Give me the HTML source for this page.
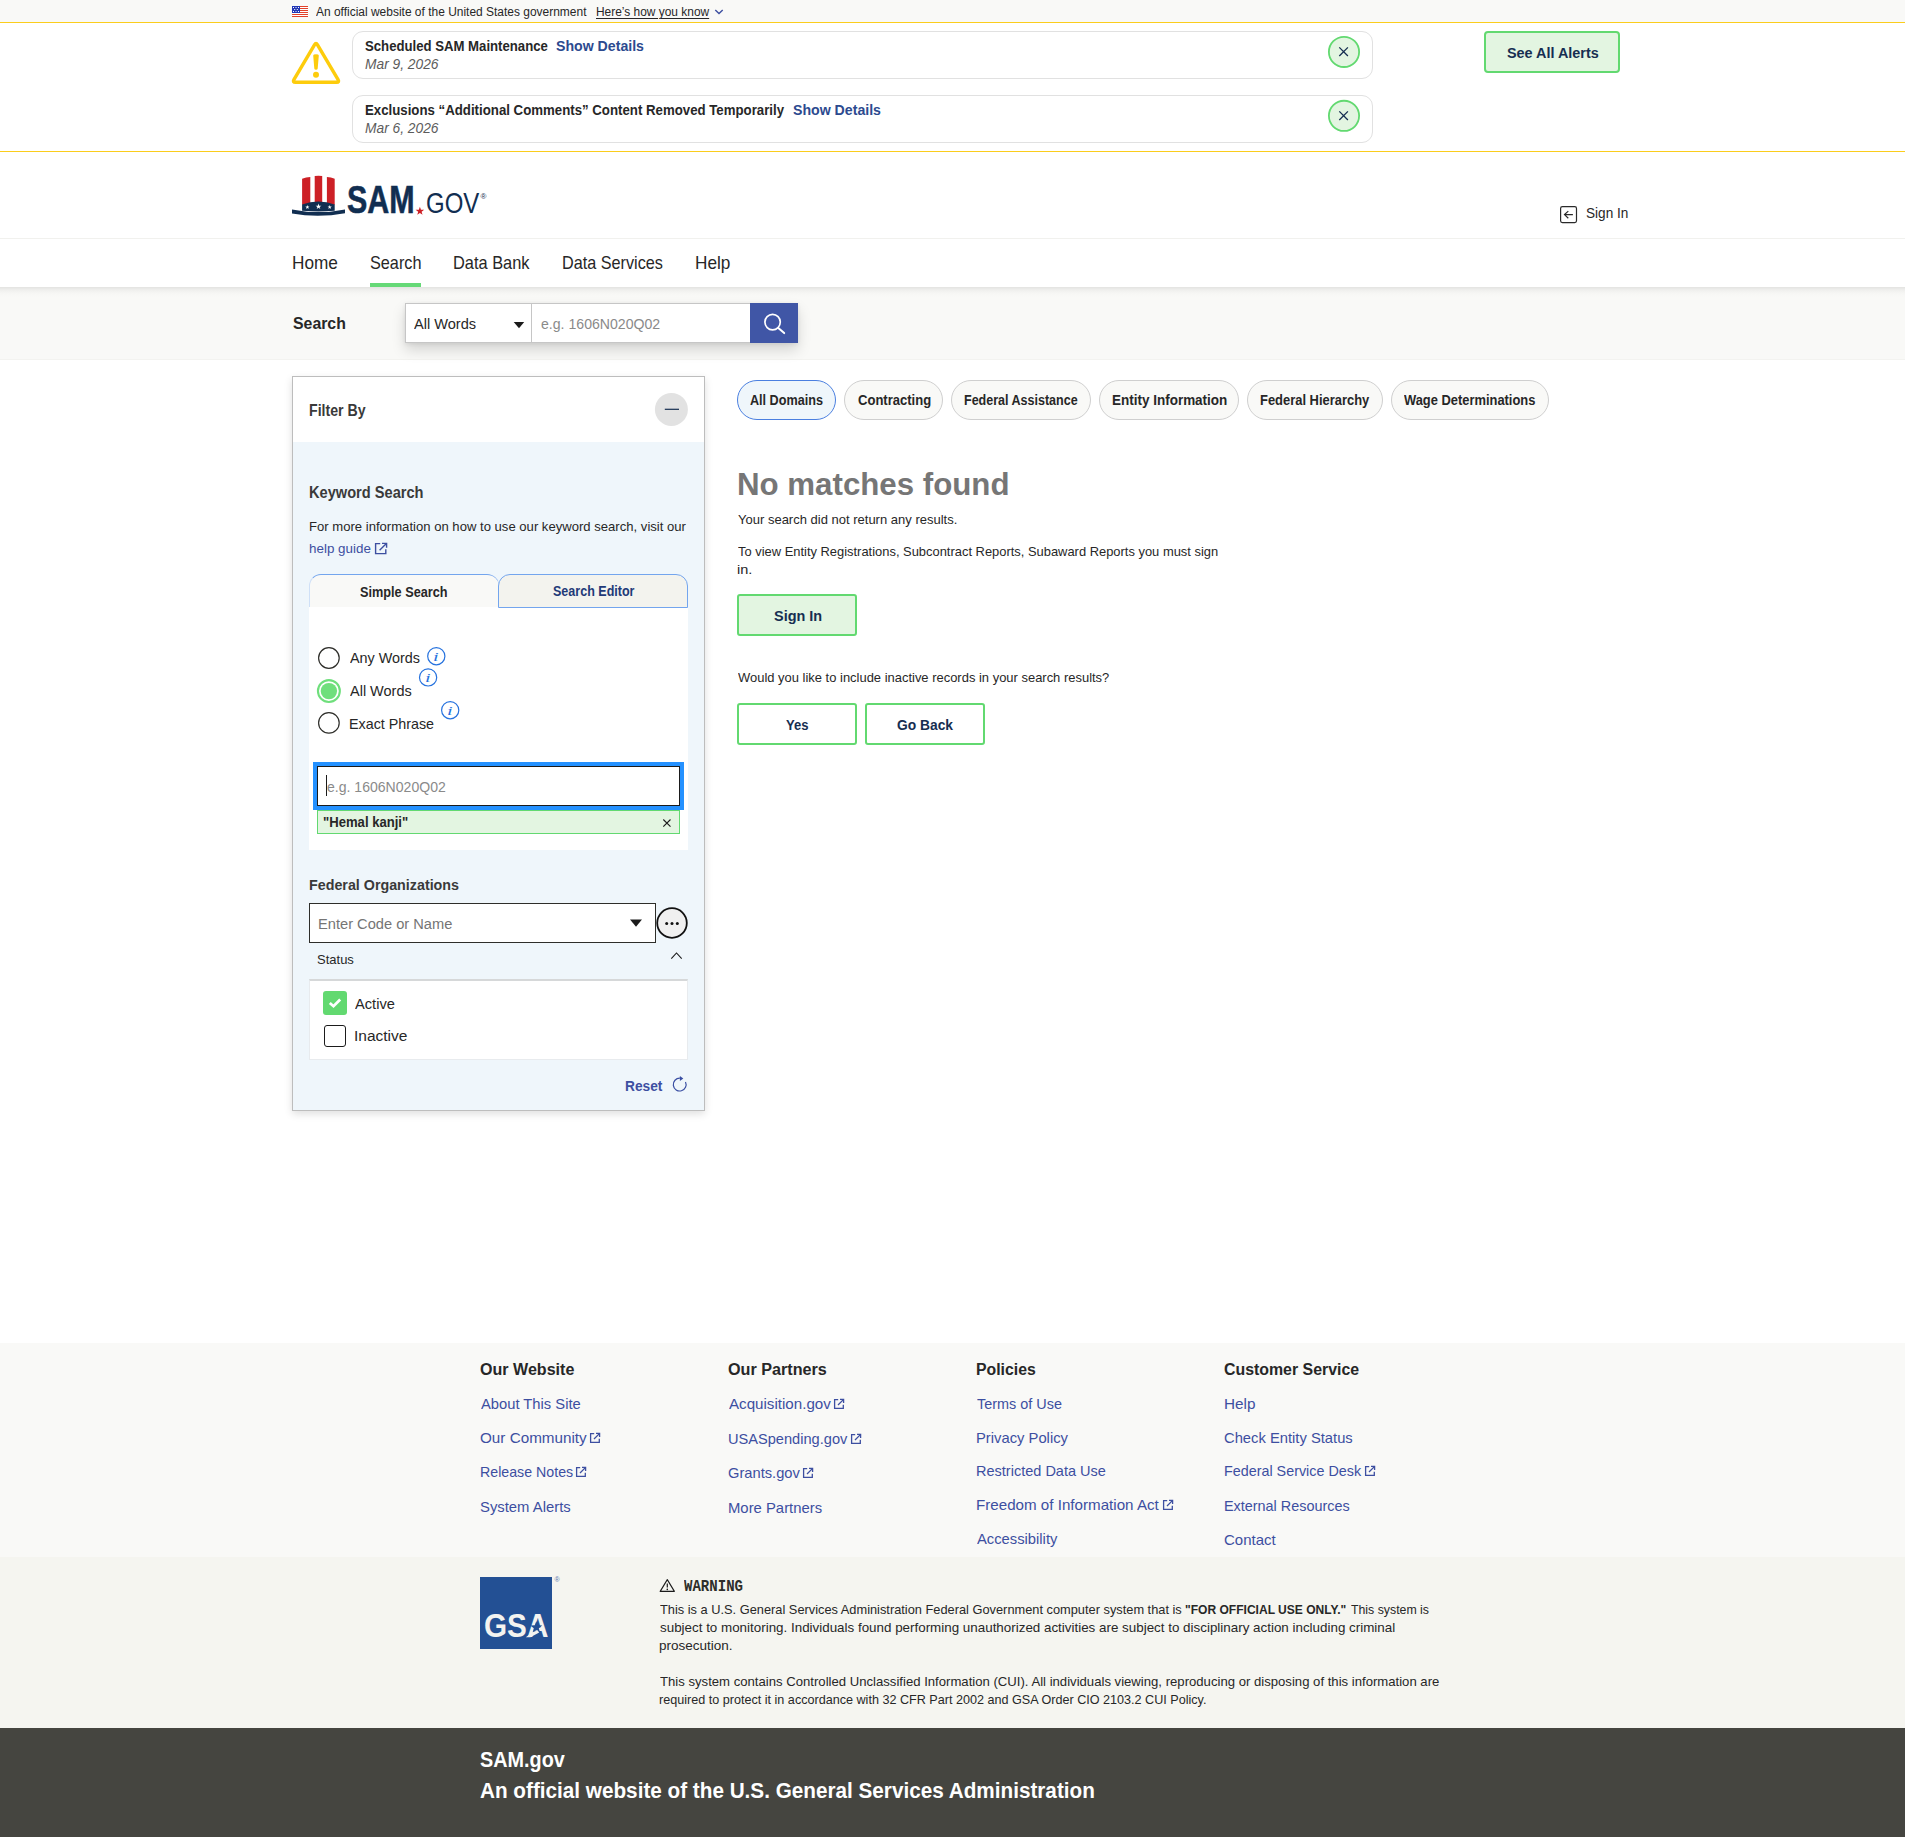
<!DOCTYPE html><html lang="en"><head><meta charset="utf-8"><title>SAM.gov | Search</title><style>
html,body{margin:0;padding:0;background:#fff}
body{width:1905px;height:1837px;position:relative;overflow:hidden;font-family:"Liberation Sans",sans-serif;color:#1b1b1b}
.abs{position:absolute;display:block}
.t{position:absolute;white-space:nowrap;line-height:1;transform-origin:0 50%}
.pill{position:absolute;top:380px;height:40px;box-sizing:border-box;border:1px solid #cfcfcf;border-radius:20px;background:#f9f9f7}

</style></head><body>
<!-- static shapes: backgrounds, boxes, icons -->
<div class="abs" style="left:0;top:0;width:1905px;height:22px;background:#f9f9f7"></div>
<div class="abs" style="left:0;top:22px;width:1905px;height:1px;background:#fbcd1c"></div>
<div class="abs" style="left:0;top:151px;width:1905px;height:1px;background:#fbcd1c"></div>
<!-- flag -->
<svg class="abs" style="left:292px;top:6px" width="16" height="11" viewBox="0 0 16 11"><rect width="16" height="11" fill="#fff"/><g fill="#e2412a"><rect y="0" width="16" height="1"/><rect y="2" width="16" height="1"/><rect y="4" width="16" height="1"/><rect y="6" width="16" height="1"/><rect y="8" width="16" height="1"/><rect y="10" width="16" height="1"/></g><rect width="8" height="7" fill="#2337b5"/><g fill="#fff"><rect x="1" y="1" width="1" height="1"/><rect x="3.5" y="1" width="1" height="1"/><rect x="6" y="1" width="1" height="1"/><rect x="2.2" y="3" width="1" height="1"/><rect x="4.8" y="3" width="1" height="1"/><rect x="1" y="5" width="1" height="1"/><rect x="3.5" y="5" width="1" height="1"/><rect x="6" y="5" width="1" height="1"/></g></svg>
<!-- chevron -->
<svg class="abs" style="left:714px;top:8px" width="10" height="8" viewBox="0 0 10 8"><path d="M1.3 2 L5 5.6 L8.7 2" fill="none" stroke="#3d4fa1" stroke-width="1.4"/></svg>
<!-- warning triangle -->
<svg class="abs" style="left:289px;top:38px" width="54" height="50" viewBox="0 0 54 50"><path d="M25.48 6.79 Q27 4.2 28.52 6.79 L49.08 41.71 Q50.6 44.3 47.6 44.3 L6.4 44.3 Q3.4 44.3 4.92 41.71 Z" fill="none" stroke="#fdcc0c" stroke-width="3.4" stroke-linejoin="round"/><path d="M24.2 17.6 Q24.2 16.2 27 16.2 Q29.8 16.2 29.8 17.6 L28.7 30.5 Q28.6 31.7 27 31.7 Q25.4 31.7 25.3 30.5 Z" fill="#fdcc0c"/><circle cx="27" cy="36.8" r="3" fill="#fdcc0c"/></svg>
<!-- alert cards -->
<div class="abs" style="left:352px;top:31px;width:1021px;height:47.6px;border:1.2px solid #e1e1e1;border-radius:11px;box-sizing:border-box;background:#fff"></div>
<div class="abs" style="left:352px;top:95px;width:1021px;height:47.6px;border:1.2px solid #e1e1e1;border-radius:11px;box-sizing:border-box;background:#fff"></div>
<!-- close buttons -->
<svg class="abs" style="left:1327px;top:35px" width="34" height="34" viewBox="0 0 34 34"><circle cx="17" cy="16.9" r="15.1" fill="#e3f5e1" stroke="#62d970" stroke-width="1.8"/><path d="M12.3 12.4 L20.9 21 M20.9 12.4 L12.3 21" stroke="#162e51" stroke-width="1.3"/></svg>
<svg class="abs" style="left:1327px;top:99px" width="34" height="34" viewBox="0 0 34 34"><circle cx="17" cy="16.85" r="15.1" fill="#e3f5e1" stroke="#62d970" stroke-width="1.8"/><path d="M12.3 12.4 L20.9 21 M20.9 12.4 L12.3 21" stroke="#162e51" stroke-width="1.3"/></svg>
<!-- see all alerts -->
<div class="abs" style="left:1484px;top:31px;width:136px;height:41.8px;border:2px solid #62d970;border-radius:4px;box-sizing:border-box;background:#e3f5e1"></div>

<!-- header -->
<div class="abs" style="left:0;top:238px;width:1905px;height:1px;background:#f1f1ee"></div>
<!-- logo hat -->
<svg class="abs" style="left:290px;top:174px" width="58" height="46" viewBox="0 0 58 46">
<path d="M12.1 4.8 Q16 3.3 20.3 3 L20.3 30 L12.1 31 Z" fill="#cd2026"/>
<path d="M24.7 2 Q28.4 1.7 32.2 2 L32.2 29 L24.7 29 Z" fill="#cd2026"/>
<path d="M36.9 3 Q41 3.3 44.7 4.8 L44.7 31 L36.9 30 Z" fill="#cd2026"/>
<path d="M12.1 30.6 Q28.4 24.6 44.7 30.6 L44.7 36.7 Q28.4 38.1 12.1 36.7 Z" fill="#112e51"/>
<path d="M2 35.4 Q28.5 40.8 55 35.4 L55 39.2 Q28.5 44.2 2 39.5 Z" fill="#112e51"/>
<g fill="#fff"><path d="M17.40,31.00 L17.92,32.49 L19.49,32.52 L18.24,33.47 L18.69,34.98 L17.40,34.08 L16.11,34.98 L16.56,33.47 L15.31,32.52 L16.88,32.49Z"/><path d="M28.50,29.60 L29.21,31.63 L31.35,31.67 L29.64,32.97 L30.26,35.03 L28.50,33.80 L26.74,35.03 L27.36,32.97 L25.65,31.67 L27.79,31.63Z"/><path d="M39.70,31.00 L40.22,32.49 L41.79,32.52 L40.54,33.47 L40.99,34.98 L39.70,34.08 L38.41,34.98 L38.86,33.47 L37.61,32.52 L39.18,32.49Z"/></g>
</svg>
<!-- red star in logo -->
<svg class="abs" style="left:415px;top:206px" width="10" height="10" viewBox="0 0 10 10"><path d="M4.90,0.70 L5.96,3.74 L9.18,3.81 L6.61,5.76 L7.55,8.84 L4.90,7.00 L2.25,8.84 L3.19,5.76 L0.62,3.81 L3.84,3.74Z" fill="#cd2026"/></svg>
<!-- sign in icon -->
<svg class="abs" style="left:1559px;top:205px" width="20" height="20" viewBox="0 0 20 20"><rect x="1.6" y="1.7" width="15.9" height="15.9" rx="1.8" fill="none" stroke="#2a2a2a" stroke-width="1.2"/><path d="M13.9 9.6 L5.6 9.6 M9.3 6.1 L5.5 9.6 L9.3 13.2" fill="none" stroke="#2a2a2a" stroke-width="1.2"/></svg>
<!-- nav underline -->
<div class="abs" style="left:370px;top:283px;width:51px;height:4px;background:#66d977"></div>
<!-- search band -->
<div class="abs" style="left:0;top:287px;width:1905px;height:72.5px;background:linear-gradient(#e3e3e1 0,#efefed 3px,#f6f6f4 6px,#f9f9f7 10px,#f9f9f7 100%)"></div>
<div class="abs" style="left:0;top:359px;width:1905px;height:1px;background:#f3f3f0"></div>
<div class="abs" style="left:405px;top:303px;width:393px;height:40px;background:#fff;box-shadow:0 7px 14px rgba(0,0,0,.15),0 1px 4px rgba(0,0,0,.08)"></div>
<div class="abs" style="left:405px;top:303px;width:345px;height:40px;box-sizing:border-box;border:1px solid #c6c6c6;border-right:0;background:#fff"></div>
<div class="abs" style="left:531px;top:303px;width:1px;height:40px;background:#c6c6c6"></div>
<svg class="abs" style="left:513px;top:320.5px" width="12" height="8" viewBox="0 0 12 8"><path d="M0.7 1 L11.2 1 L6 7.2 Z" fill="#1b1b1b"/></svg>
<div class="abs" style="left:750px;top:303px;width:48px;height:40px;background:#4056a6"></div>
<svg class="abs" style="left:762px;top:311px" width="26" height="26" viewBox="0 0 26 26"><circle cx="10.6" cy="11.1" r="7.7" fill="none" stroke="#fff" stroke-width="1.7"/><path d="M16.3 17 L22.2 22.1" stroke="#fff" stroke-width="2" stroke-linecap="round"/></svg>

<!-- filter panel -->
<div class="abs" style="left:292px;top:376px;width:413px;height:735px;box-sizing:border-box;border:1px solid #bdbdbd;background:#eff6fb;box-shadow:0 3px 8px rgba(0,0,0,.13)"></div>
<div class="abs" style="left:293px;top:377px;width:411px;height:65px;background:#fff"></div>
<svg class="abs" style="left:654px;top:392px" width="35" height="35" viewBox="0 0 35 35"><circle cx="17.4" cy="17.4" r="16.5" fill="#e2e2e2"/><path d="M10.8 17.3 L25 17.3" stroke="#162e51" stroke-width="1.2"/></svg>
<!-- help guide icon -->
<svg class="abs" style="left:374px;top:542px" width="14" height="13" viewBox="0 0 14 13"><path d="M6.2 1.6 L1.6 1.6 L1.6 11.6 L11.8 11.6 L11.8 7.2 M8 1.4 L12.6 1.4 L12.6 5.8 M12.4 1.6 L5.6 8.2" fill="none" stroke="#3d4fa1" stroke-width="1.4"/></svg>
<!-- tabs -->
<div class="abs" style="left:309px;top:607px;width:379px;height:243px;background:#fff"></div>
<div class="abs" style="left:309px;top:574px;width:190px;height:33px;box-sizing:border-box;border-top:1px solid #73a5ee;border-left:1px solid #cfe0f7;border-radius:12px 12px 0 0;background:#f9f9f7"></div>
<div class="abs" style="left:498px;top:574px;width:190px;height:34px;box-sizing:border-box;border:1px solid #73a5ee;border-radius:12px 12px 0 0;background:#f3f3ee"></div>
<!-- radios -->
<svg class="abs" style="left:316px;top:645px" width="26" height="92" viewBox="0 0 26 92">
<circle cx="12.9" cy="13" r="10.3" fill="#fff" stroke="#2e2e2a" stroke-width="1.2"/>
<circle cx="12.9" cy="46.1" r="10.95" fill="#fff" stroke="#6fdf7c" stroke-width="2.1"/><circle cx="12.9" cy="46.1" r="8.2" fill="#6fdf7c"/>
<circle cx="12.9" cy="77.9" r="10.3" fill="#fff" stroke="#2e2e2a" stroke-width="1.2"/>
</svg>
<!-- info icons circles -->
<svg class="abs" style="left:426px;top:646px" width="21" height="21" viewBox="0 0 21 21"><circle cx="10.3" cy="10.2" r="8.6" fill="none" stroke="#2672de" stroke-width="1.2"/></svg>
<svg class="abs" style="left:418px;top:667px" width="21" height="21" viewBox="0 0 21 21"><circle cx="10.1" cy="10.4" r="8.6" fill="none" stroke="#2672de" stroke-width="1.2"/></svg>
<svg class="abs" style="left:440px;top:700px" width="21" height="21" viewBox="0 0 21 21"><circle cx="10.2" cy="10.2" r="8.6" fill="none" stroke="#2672de" stroke-width="1.2"/></svg>
<!-- keyword input -->
<div class="abs" style="left:313px;top:762px;width:371px;height:48px;background:#2491ff"></div>
<div class="abs" style="left:317px;top:766px;width:363px;height:40px;box-sizing:border-box;border:1px solid #1b1b1b;background:#fff"></div>
<div class="abs" style="left:326px;top:775px;width:1px;height:21px;background:#1b1b1b"></div>
<!-- chip -->
<div class="abs" style="left:317px;top:810px;width:363px;height:23.6px;box-sizing:border-box;border:1px solid #62d970;background:#e3f5e1"></div>
<svg class="abs" style="left:662px;top:818px" width="10" height="10" viewBox="0 0 10 10"><path d="M1.3 1.5 L8.5 8.7 M8.5 1.5 L1.3 8.7" stroke="#1b1b1b" stroke-width="1.1"/></svg>
<!-- fed org input -->
<div class="abs" style="left:309px;top:903px;width:347px;height:39.5px;box-sizing:border-box;border:1.5px solid #2e2e2a;background:#fff"></div>
<svg class="abs" style="left:629px;top:918px" width="14" height="10" viewBox="0 0 14 10"><path d="M1 1.5 L13 1.5 L7 8.8 Z" fill="#1b1b1b"/></svg>
<svg class="abs" style="left:655px;top:906px" width="34" height="34" viewBox="0 0 34 34"><circle cx="17" cy="17" r="14.8" fill="#f0f0f0" stroke="#111" stroke-width="1.8"/><circle cx="11.7" cy="17.6" r="1.5" fill="#111"/><circle cx="17" cy="17.6" r="1.5" fill="#111"/><circle cx="22.3" cy="17.6" r="1.5" fill="#111"/></svg>
<!-- status chevron -->
<svg class="abs" style="left:670px;top:951px" width="13" height="9" viewBox="0 0 13 9"><path d="M1.3 7.6 L6.5 2 L11.7 7.6" fill="none" stroke="#1b1b1b" stroke-width="1.1"/></svg>
<!-- status box -->
<div class="abs" style="left:309px;top:979px;width:379px;height:81px;box-sizing:border-box;border:1px solid #e8ebee;border-top:2px solid #d6d8d9;background:#fff"></div>
<svg class="abs" style="left:323px;top:991px" width="24" height="24" viewBox="0 0 24 24"><rect width="24" height="24" rx="3" fill="#62d970"/><path d="M6.8 12 L10.5 15.2 L17.2 8.6" fill="none" stroke="#fff" stroke-width="2.8"/></svg>
<div class="abs" style="left:324px;top:1025px;width:22px;height:22px;box-sizing:border-box;border:1.4px solid #1b1b1b;border-radius:3px;background:#fff"></div>
<!-- reset icon -->
<svg class="abs" style="left:671px;top:1075px" width="18" height="18" viewBox="0 0 18 18"><path d="M8.92 3.2 A6.4 6.4 0 1 0 14.5 6.9" fill="none" stroke="#3a4fa3" stroke-width="1.2"/><path d="M8.9 1 L8.9 5.9 L12.3 3.4 Z" fill="#3a4fa3"/></svg>

<!-- pills -->
<div class="pill" style="left:737px;width:99px;border-color:#4a7fe0;background:#eff6fb"></div>
<div class="pill" style="left:844px;width:99px"></div>
<div class="pill" style="left:951px;width:139.5px"></div>
<div class="pill" style="left:1099px;width:140px"></div>
<div class="pill" style="left:1247px;width:135.5px"></div>
<div class="pill" style="left:1391px;width:158px"></div>
<!-- buttons -->
<div class="abs" style="left:737px;top:594px;width:120px;height:42px;border:2px solid #62d970;border-radius:3px;box-sizing:border-box;background:#e3f5e1"></div>
<div class="abs" style="left:737px;top:703px;width:120px;height:42px;border:2px solid #62d970;border-radius:3px;box-sizing:border-box;background:#fff"></div>
<div class="abs" style="left:865px;top:703px;width:120px;height:42px;border:2px solid #62d970;border-radius:3px;box-sizing:border-box;background:#fff"></div>

<!-- footer -->
<div class="abs" style="left:0;top:1342.5px;width:1905px;height:215px;background:#f9f9f7"></div>
<div class="abs" style="left:0;top:1557px;width:1905px;height:171px;background:#f5f5f0"></div>
<div class="abs" style="left:0;top:1728px;width:1905px;height:109px;background:#454540"></div>
<!-- GSA logo -->
<div class="abs" style="left:480px;top:1577px;width:72px;height:72px;background:#235094"></div>

<!-- warning small icon -->
<svg class="abs" style="left:659px;top:1578px" width="17" height="15" viewBox="0 0 17 15"><path d="M8.3 1.6 L15.4 13.4 L1.2 13.4 Z" fill="none" stroke="#1b1b1b" stroke-width="1.1" stroke-linejoin="round"/><path d="M8.3 5.6 L8.3 9.6" stroke="#1b1b1b" stroke-width="1.2"/><circle cx="8.3" cy="11.4" r=".8" fill="#1b1b1b"/></svg>

<svg class="abs" style="left:589.0px;top:1432.4px" width="12" height="12" viewBox="0 0 12 12"><path d="M5.2 1.7 L1.6 1.7 L1.6 10.4 L10.3 10.4 L10.3 6.8 M7 1.4 L10.6 1.4 L10.6 5 M10.4 1.6 L5 7" fill="none" stroke="#3d4fa1" stroke-width="1.3"/></svg>
<svg class="abs" style="left:575.4px;top:1466.4px" width="12" height="12" viewBox="0 0 12 12"><path d="M5.2 1.7 L1.6 1.7 L1.6 10.4 L10.3 10.4 L10.3 6.8 M7 1.4 L10.6 1.4 L10.6 5 M10.4 1.6 L5 7" fill="none" stroke="#3d4fa1" stroke-width="1.3"/></svg>
<svg class="abs" style="left:833.2px;top:1398.4px" width="12" height="12" viewBox="0 0 12 12"><path d="M5.2 1.7 L1.6 1.7 L1.6 10.4 L10.3 10.4 L10.3 6.8 M7 1.4 L10.6 1.4 L10.6 5 M10.4 1.6 L5 7" fill="none" stroke="#3d4fa1" stroke-width="1.3"/></svg>
<svg class="abs" style="left:849.9px;top:1433.4px" width="12" height="12" viewBox="0 0 12 12"><path d="M5.2 1.7 L1.6 1.7 L1.6 10.4 L10.3 10.4 L10.3 6.8 M7 1.4 L10.6 1.4 L10.6 5 M10.4 1.6 L5 7" fill="none" stroke="#3d4fa1" stroke-width="1.3"/></svg>
<svg class="abs" style="left:802.2px;top:1467.4px" width="12" height="12" viewBox="0 0 12 12"><path d="M5.2 1.7 L1.6 1.7 L1.6 10.4 L10.3 10.4 L10.3 6.8 M7 1.4 L10.6 1.4 L10.6 5 M10.4 1.6 L5 7" fill="none" stroke="#3d4fa1" stroke-width="1.3"/></svg>
<svg class="abs" style="left:1161.7px;top:1499.4px" width="12" height="12" viewBox="0 0 12 12"><path d="M5.2 1.7 L1.6 1.7 L1.6 10.4 L10.3 10.4 L10.3 6.8 M7 1.4 L10.6 1.4 L10.6 5 M10.4 1.6 L5 7" fill="none" stroke="#3d4fa1" stroke-width="1.3"/></svg>
<svg class="abs" style="left:1363.8px;top:1465.4px" width="12" height="12" viewBox="0 0 12 12"><path d="M5.2 1.7 L1.6 1.7 L1.6 10.4 L10.3 10.4 L10.3 6.8 M7 1.4 L10.6 1.4 L10.6 5 M10.4 1.6 L5 7" fill="none" stroke="#3d4fa1" stroke-width="1.3"/></svg>
<div class="t" style="left:316.00px;top:6px;font-size:12.51px;color:#272727;transform:scaleX(0.9572);">An official website of the United States government</div>
<div class="t" style="left:596.00px;top:6px;font-size:12.51px;color:#272727;text-decoration:underline;text-underline-offset:1.5px;text-decoration-thickness:1px;transform:scaleX(0.9542);">Here’s how you know</div>
<div class="t" style="left:365.00px;top:39px;font-size:14.26px;color:#272727;font-weight:700;transform:scaleX(0.9237);">Scheduled SAM Maintenance</div>
<div class="t" style="left:556.00px;top:39px;font-size:14.26px;color:#2c4a8f;font-weight:700;transform:scaleX(0.9920);">Show Details</div>
<div class="t" style="left:365.00px;top:57px;font-size:14.65px;color:#5c5c5c;font-style:italic;transform:scaleX(0.9404);">Mar 9, 2026</div>
<div class="t" style="left:365.00px;top:103px;font-size:14.26px;color:#272727;font-weight:700;transform:scaleX(0.9291);">Exclusions “Additional Comments” Content Removed Temporarily</div>
<div class="t" style="left:793.00px;top:103px;font-size:14.26px;color:#2c4a8f;font-weight:700;transform:scaleX(0.9920);">Show Details</div>
<div class="t" style="left:365.00px;top:121px;font-size:14.65px;color:#5c5c5c;font-style:italic;transform:scaleX(0.9404);">Mar 6, 2026</div>
<div class="t" style="left:1507.00px;top:45px;font-size:15.05px;color:#162e51;font-weight:700;transform:scaleX(0.9560);">See All Alerts</div>
<div class="t" style="left:347.00px;top:180px;font-size:39.7px;color:#112e51;font-weight:700;-webkit-text-stroke:.6px #112e51;transform:scaleX(0.7667);">SAM</div>
<div class="t" style="left:426.00px;top:188px;font-size:30.1px;color:#112e51;transform:scaleX(0.7963);">GOV</div>
<div class="t" style="left:480.60px;top:193px;font-size:8px;color:#112e51;">®</div>
<div class="t" style="left:1586.00px;top:206px;font-size:14.75px;color:#272727;transform:scaleX(0.9206);">Sign In</div>
<div class="t" style="left:292.00px;top:255px;font-size:17.49px;color:#272727;transform:scaleX(0.9845);">Home</div>
<div class="t" style="left:370.00px;top:255px;font-size:17.49px;color:#272727;transform:scaleX(0.9286);">Search</div>
<div class="t" style="left:453.00px;top:255px;font-size:17.49px;color:#272727;transform:scaleX(0.9365);">Data Bank</div>
<div class="t" style="left:562.00px;top:255px;font-size:17.49px;color:#272727;transform:scaleX(0.9268);">Data Services</div>
<div class="t" style="left:695.00px;top:255px;font-size:17.49px;color:#272727;transform:scaleX(0.9843);">Help</div>
<div class="t" style="left:293.00px;top:316px;font-size:16.9px;color:#272727;font-weight:700;transform:scaleX(0.9379);">Search</div>
<div class="t" style="left:414.00px;top:317px;font-size:14.95px;color:#272727;transform:scaleX(0.9761);">All Words</div>
<div class="t" style="left:541.00px;top:317px;font-size:14.95px;color:#8a8a8a;transform:scaleX(0.9443);">e.g. 1606N020Q02</div>
<div class="t" style="left:309.00px;top:403px;font-size:15.63px;color:#3a3a3a;font-weight:700;transform:scaleX(0.9067);">Filter By</div>
<div class="t" style="left:309.00px;top:485px;font-size:15.63px;color:#3a3a3a;font-weight:700;transform:scaleX(0.9352);">Keyword Search</div>
<div class="t" style="left:309.00px;top:520px;font-size:13.48px;color:#272727;transform:scaleX(0.9721);">For more information on how to use our keyword search, visit our</div>
<div class="t" style="left:309.00px;top:542px;font-size:13.48px;color:#3d4fa1;transform:scaleX(0.9946);">help guide</div>
<div class="t" style="left:360.00px;top:585px;font-size:14.07px;color:#272727;font-weight:700;transform:scaleX(0.9032);">Simple Search</div>
<div class="t" style="left:553.00px;top:584px;font-size:14.07px;color:#1f3a78;font-weight:700;transform:scaleX(0.8911);">Search Editor</div>
<div class="t" style="left:350.00px;top:651px;font-size:14.95px;color:#272727;transform:scaleX(0.9618);">Any Words</div>
<div class="t" style="left:350.00px;top:684px;font-size:14.95px;color:#272727;transform:scaleX(0.9698);">All Words</div>
<div class="t" style="left:349.00px;top:717px;font-size:14.95px;color:#272727;transform:scaleX(0.9577);">Exact Phrase</div>
<div class="t" style="left:433.20px;top:650px;font-size:13.5px;color:#2672de;font-family:'Liberation Serif',serif;font-style:italic;transform:scaleX(1.5000);">i</div>
<div class="t" style="left:425.20px;top:671px;font-size:13.5px;color:#2672de;font-family:'Liberation Serif',serif;font-style:italic;transform:scaleX(1.5000);">i</div>
<div class="t" style="left:447.10px;top:704px;font-size:13.5px;color:#2672de;font-family:'Liberation Serif',serif;font-style:italic;transform:scaleX(1.5000);">i</div>
<div class="t" style="left:327.00px;top:779px;font-size:15.44px;color:#8a8a8a;transform:scaleX(0.9105);">e.g. 1606N020Q02</div>
<div class="t" style="left:323.00px;top:815px;font-size:14.26px;color:#272727;font-weight:700;transform:scaleX(0.9192);">"Hemal kanji"</div>
<div class="t" style="left:309.00px;top:878px;font-size:14.65px;color:#3a3a3a;font-weight:700;transform:scaleX(0.9756);">Federal Organizations</div>
<div class="t" style="left:318.00px;top:916px;font-size:15.44px;color:#757575;transform:scaleX(0.9489);">Enter Code or Name</div>
<div class="t" style="left:317.00px;top:953px;font-size:13.48px;color:#272727;transform:scaleX(0.9653);">Status</div>
<div class="t" style="left:355.00px;top:996px;font-size:15.44px;color:#272727;transform:scaleX(0.9487);">Active</div>
<div class="t" style="left:354.00px;top:1028px;font-size:15.44px;color:#272727;transform:scaleX(1.0042);">Inactive</div>
<div class="t" style="left:625.00px;top:1079px;font-size:14.65px;color:#3d4fa1;font-weight:700;transform:scaleX(0.9373);">Reset</div>
<div class="t" style="left:750.00px;top:394px;font-size:13.78px;color:#272727;font-weight:700;transform:scaleX(0.9163);">All Domains</div>
<div class="t" style="left:858.00px;top:394px;font-size:13.78px;color:#272727;font-weight:700;transform:scaleX(0.9472);">Contracting</div>
<div class="t" style="left:964.00px;top:394px;font-size:13.78px;color:#272727;font-weight:700;transform:scaleX(0.9094);">Federal Assistance</div>
<div class="t" style="left:1112.00px;top:394px;font-size:13.78px;color:#272727;font-weight:700;transform:scaleX(0.9792);">Entity Information</div>
<div class="t" style="left:1260.00px;top:394px;font-size:13.78px;color:#272727;font-weight:700;transform:scaleX(0.9391);">Federal Hierarchy</div>
<div class="t" style="left:1404.00px;top:394px;font-size:13.78px;color:#272727;font-weight:700;transform:scaleX(0.9367);">Wage Determinations</div>
<div class="t" style="left:737.00px;top:469px;font-size:31.26px;color:#767676;font-weight:700;transform:scaleX(0.9998);">No matches found</div>
<div class="t" style="left:738.00px;top:514px;font-size:12.9px;color:#272727;transform:scaleX(1.0090);">Your search did not return any results.</div>
<div class="t" style="left:738.00px;top:546px;font-size:12.9px;color:#272727;transform:scaleX(1.0017);">To view Entity Registrations, Subcontract Reports, Subaward Reports you must sign</div>
<div class="t" style="left:737.00px;top:564px;font-size:12.9px;color:#272727;transform:scaleX(1.1280);">in.</div>
<div class="t" style="left:774.00px;top:609px;font-size:14.65px;color:#162e51;font-weight:700;transform:scaleX(0.9876);">Sign In</div>
<div class="t" style="left:738.00px;top:672px;font-size:12.9px;color:#272727;transform:scaleX(1.0049);">Would you like to include inactive records in your search results?</div>
<div class="t" style="left:786.00px;top:718px;font-size:14.65px;color:#162e51;font-weight:700;transform:scaleX(0.8910);">Yes</div>
<div class="t" style="left:897.00px;top:718px;font-size:14.65px;color:#162e51;font-weight:700;transform:scaleX(0.9437);">Go Back</div>
<div class="t" style="left:480.00px;top:1361px;font-size:16.22px;color:#272727;font-weight:700;transform:scaleX(0.9914);">Our Website</div>
<div class="t" style="left:728.00px;top:1361px;font-size:16.22px;color:#272727;font-weight:700;transform:scaleX(0.9975);">Our Partners</div>
<div class="t" style="left:976.00px;top:1361px;font-size:16.22px;color:#272727;font-weight:700;transform:scaleX(0.9758);">Policies</div>
<div class="t" style="left:1224.00px;top:1361px;font-size:16.22px;color:#272727;font-weight:700;transform:scaleX(0.9802);">Customer Service</div>
<div class="t" style="left:481.00px;top:1397px;font-size:14.95px;color:#3d4fa1;transform:scaleX(0.9870);">About This Site</div>
<div class="t" style="left:480.00px;top:1431px;font-size:14.95px;color:#3d4fa1;transform:scaleX(1.0204);">Our Community</div>
<div class="t" style="left:480.00px;top:1465px;font-size:14.95px;color:#3d4fa1;transform:scaleX(0.9511);">Release Notes</div>
<div class="t" style="left:480.00px;top:1500px;font-size:14.95px;color:#3d4fa1;transform:scaleX(0.9937);">System Alerts</div>
<div class="t" style="left:729.00px;top:1397px;font-size:14.95px;color:#3d4fa1;transform:scaleX(1.0134);">Acquisition.gov</div>
<div class="t" style="left:728.00px;top:1432px;font-size:14.95px;color:#3d4fa1;transform:scaleX(0.9773);">USASpending.gov</div>
<div class="t" style="left:728.00px;top:1466px;font-size:14.95px;color:#3d4fa1;transform:scaleX(0.9830);">Grants.gov</div>
<div class="t" style="left:728.00px;top:1501px;font-size:14.95px;color:#3d4fa1;transform:scaleX(0.9942);">More Partners</div>
<div class="t" style="left:977.00px;top:1397px;font-size:14.95px;color:#3d4fa1;transform:scaleX(0.9649);">Terms of Use</div>
<div class="t" style="left:976.00px;top:1431px;font-size:14.95px;color:#3d4fa1;transform:scaleX(0.9892);">Privacy Policy</div>
<div class="t" style="left:976.00px;top:1464px;font-size:14.95px;color:#3d4fa1;transform:scaleX(0.9718);">Restricted Data Use</div>
<div class="t" style="left:976.00px;top:1498px;font-size:14.95px;color:#3d4fa1;transform:scaleX(1.0148);">Freedom of Information Act</div>
<div class="t" style="left:977.00px;top:1532px;font-size:14.95px;color:#3d4fa1;transform:scaleX(0.9881);">Accessibility</div>
<div class="t" style="left:1224.00px;top:1397px;font-size:14.95px;color:#3d4fa1;transform:scaleX(1.0241);">Help</div>
<div class="t" style="left:1224.00px;top:1431px;font-size:14.95px;color:#3d4fa1;transform:scaleX(0.9877);">Check Entity Status</div>
<div class="t" style="left:1224.00px;top:1464px;font-size:14.95px;color:#3d4fa1;transform:scaleX(0.9599);">Federal Service Desk</div>
<div class="t" style="left:1224.00px;top:1499px;font-size:14.95px;color:#3d4fa1;transform:scaleX(0.9639);">External Resources</div>
<div class="t" style="left:1224.00px;top:1533px;font-size:14.95px;color:#3d4fa1;transform:scaleX(1.0039);">Contact</div>
<div class="t" style="left:484.00px;top:1608px;font-size:34px;color:#f3f3f0;font-weight:700;transform:scaleX(0.8734);">GSA</div>
<div class="t" style="left:554.40px;top:1576px;font-size:7px;color:#5a78ad;">®</div>
<div class="t" style="left:684.00px;top:1579px;font-size:16.2px;color:#2e2e2a;font-weight:700;font-family:'Liberation Mono',monospace;transform:scaleX(0.8677);">WARNING</div>
<div class="t" style="left:660.00px;top:1604px;font-size:12.9px;color:#272727;transform:scaleX(0.9936);">This is a U.S. General Services Administration Federal Government computer system that is</div>
<div class="t" style="left:1185.00px;top:1604px;font-size:12.9px;color:#272727;font-weight:700;transform:scaleX(0.9341);">"FOR OFFICIAL USE ONLY."</div>
<div class="t" style="left:1351.00px;top:1604px;font-size:12.9px;color:#272727;transform:scaleX(0.9553);">This system is</div>
<div class="t" style="left:660.00px;top:1622px;font-size:12.9px;color:#272727;transform:scaleX(1.0385);">subject to monitoring. Individuals found performing unauthorized activities are subject to disciplinary action including criminal</div>
<div class="t" style="left:659.00px;top:1640px;font-size:12.9px;color:#272727;transform:scaleX(1.0478);">prosecution.</div>
<div class="t" style="left:660.00px;top:1676px;font-size:12.9px;color:#272727;transform:scaleX(1.0185);">This system contains Controlled Unclassified Information (CUI). All individuals viewing, reproducing or disposing of this information are</div>
<div class="t" style="left:659.00px;top:1694px;font-size:12.9px;color:#272727;transform:scaleX(0.9775);">required to protect it in accordance with 32 CFR Part 2002 and GSA Order CIO 2103.2 CUI Policy.</div>
<div class="t" style="left:480.00px;top:1750px;font-size:21.49px;color:#fff;font-weight:700;transform:scaleX(0.9233);">SAM.gov</div>
<div class="t" style="left:480.00px;top:1781px;font-size:21.49px;color:#fff;font-weight:700;transform:scaleX(0.9638);">An official website of the U.S. General Services Administration</div>
<!-- GSA star overlay -->
<svg class="abs" style="left:520px;top:1610px" width="32" height="30" viewBox="0 0 32 30"><path d="M16.30,11.20 L17.86,15.36 L22.29,15.55 L18.82,18.32 L20.00,22.60 L16.30,20.15 L12.60,22.60 L13.78,18.32 L10.31,15.55 L14.74,15.36Z" fill="#235094"/><path d="M5.8 27.3 L10.4 27.3 L19.2 22.5 L17.5 20.3 L12.2 22.6 Z" fill="#f3f3f0"/></svg>

</body></html>
